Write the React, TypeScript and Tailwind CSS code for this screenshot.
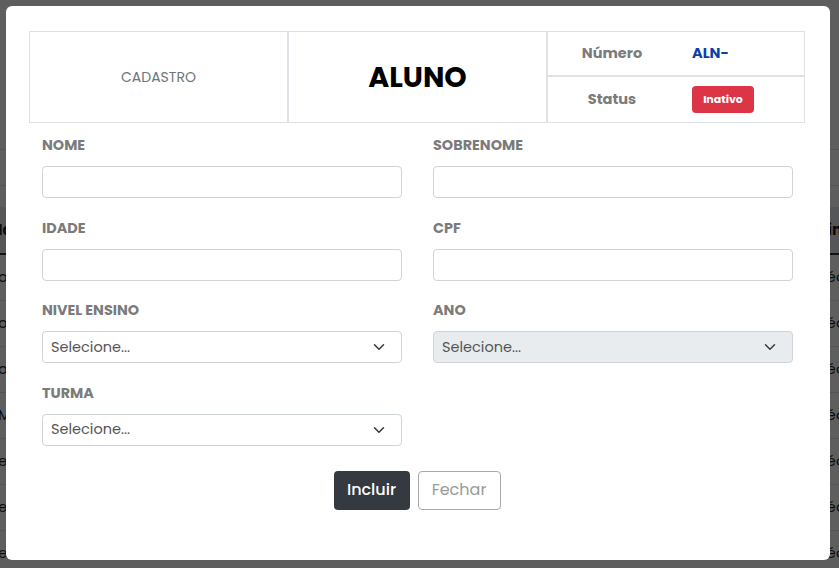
import React from "react";

const font = { fontFamily: 'Poppins, "Open Sans", "Noto Sans", sans-serif' };

function Chevron() {
  return (
    <svg width="16" height="12" viewBox="0 0 16 16" className="shrink-0">
      <path d="m2 5 6 6 6-6" fill="none" stroke="#343a40" strokeWidth="2" strokeLinecap="round" strokeLinejoin="round" />
    </svg>
  );
}

function Field({ label, select, disabled }: { label: string; select?: boolean; disabled?: boolean }) {
  return (
    <div className="mb-[19.7px]">
      <div className="h-[21px] mb-[10px] text-[14.4px] leading-[21px] font-bold text-[#7b7b7b] uppercase">{label}</div>
      {select ? (
        <div
          className={
            "h-[32px] rounded-[4px] border border-[#ced4da] flex items-center justify-between pl-[8px] pr-[14px] text-[14.5px] text-[#555] " +
            (disabled ? "bg-[#e9ecef]" : "bg-white")
          }
        >
          <span>Selecione...</span>
          <Chevron />
        </div>
      ) : (
        <div className="h-[32px] rounded-[4px] border border-[#ced4da] bg-white" />
      )}
    </div>
  );
}

const rows = [
  ["o", "éc"],
  ["o", "éc"],
  ["o", "éc"],
  ["M", "éc"],
  ["e", "éc"],
  ["e", "éc"],
  ["e", "éc"],
];

export default function App() {
  return (
    <div className="relative w-[839px] h-[568px] overflow-hidden bg-white" style={font}>
      {/* background page */}
      <div className="flex flex-col">
        <div className="h-[150px] border-b border-[#dee2e6]" />
        <div className="h-[36px] border-b border-[#dee2e6]" />
        <div className="h-[21px]" />
        <div className="h-[48px] bg-[#e7eaee] border-b-2 border-[#333] flex items-center justify-between text-[15px] font-bold text-[#222]">
          <span className="-ml-[2px]">Id</span>
          <span className="-mr-[3px]">in</span>
        </div>
        {rows.map((r, i) => (
          <div key={i} className="h-[46px] border-b border-[#dee2e6] flex items-center justify-between text-[15px] text-[#222]">
            <span className="-ml-[2px]">{r[0]}</span>
            <span className="-mr-[6px]">{r[1]}</span>
          </div>
        ))}
        <div className="h-[46px] flex">
          <div className="w-[96px] border-r border-[#dee2e6]" />
          <div className="w-[248px] border-r border-[#dee2e6]" />
          <div className="w-[313px] border-r border-[#dee2e6]" />
          <div className="w-[95px] border-r border-[#dee2e6]" />
        </div>
      </div>
      {/* overlay */}
      <div className="absolute inset-0 bg-black/[0.63]" />
      {/* modal */}
      <div className="absolute left-[6px] top-[6px] w-[824px] h-[554px] bg-white rounded-[6px] pt-[25px] pl-[23px]">
        <div className="grid grid-cols-[259px_259px_256px] w-[776px] h-[92px] border border-[#dee2e6]">
          <div className="flex items-center justify-center border-r-2 border-[#dee2e6] text-[14px] text-[#6c757d]">CADASTRO</div>
          <div className="flex items-center justify-center border-r-2 border-[#dee2e6] text-[28.5px] font-bold text-black">ALUNO</div>
          <div className="flex flex-col">
            <div className="h-[45px] border-b-2 border-[#dee2e6] flex items-center">
              <span className="w-[128px] text-center text-[14.5px] font-bold text-[#7b7b7b]">Número</span>
              <span className="pl-[16px] text-[14.5px] font-bold text-[#0b3fa8]">ALN-</span>
            </div>
            <div className="flex-1 flex items-center">
              <span className="w-[128px] text-center text-[14.5px] font-bold text-[#7b7b7b]">Status</span>
              <span className="ml-[16px] h-[27px] w-[62px] rounded-[4px] bg-[#dc3545] text-white text-[11px] font-bold flex items-center justify-center">Inativo</span>
            </div>
          </div>
        </div>
        <div className="ml-[13px] w-[751px] pt-[12px] grid grid-cols-2 gap-x-[31px]">
          <Field label="Nome" />
          <Field label="Sobrenome" />
          <Field label="Idade" />
          <Field label="CPF" />
          <Field label="Nivel Ensino" select />
          <Field label="Ano" select disabled />
          <Field label="Turma" select />
          <div />
        </div>
        <div className="w-[776px] flex justify-center gap-[8px] mt-[5px]">
          <button className="h-[39px] w-[76px] rounded-[4px] bg-[#343a40] text-white text-[16px] font-medium">Incluir</button>
          <button className="h-[39px] w-[83px] rounded-[4px] border border-[#aaa] bg-white text-[#9a9a9a] text-[16px]">Fechar</button>
        </div>
      </div>
    </div>
  );
}
